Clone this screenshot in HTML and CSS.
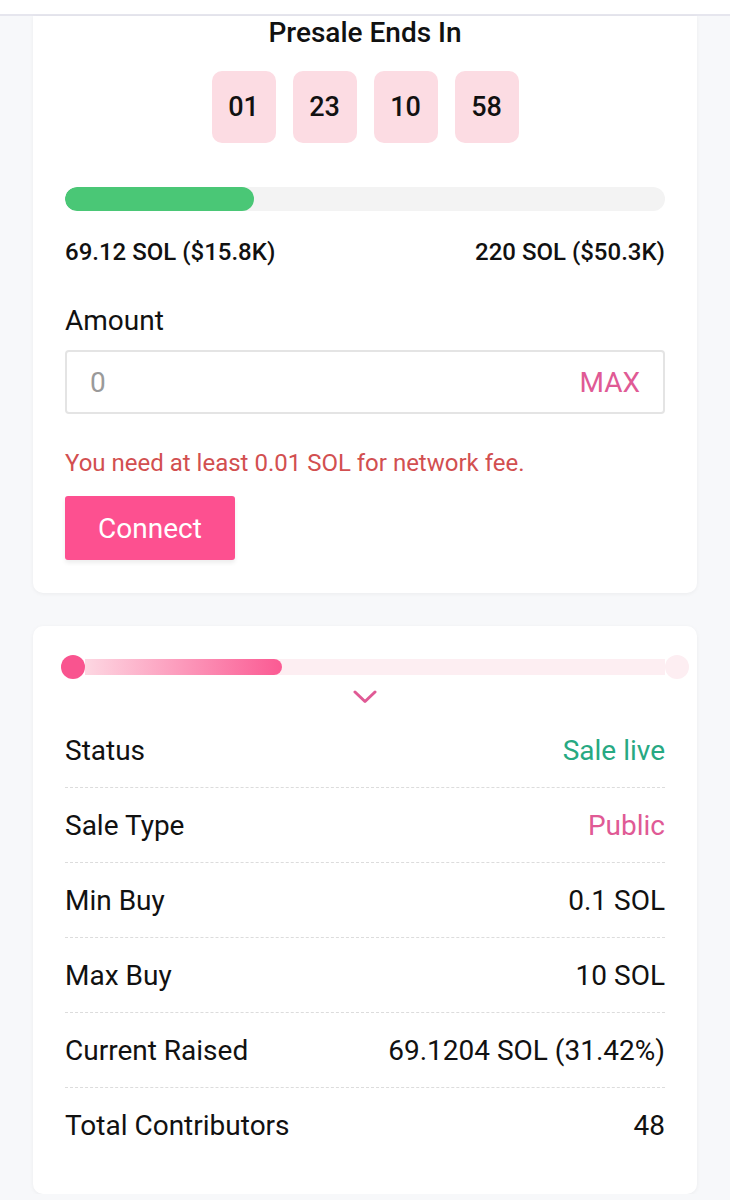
FILE: index.html
```html
<!DOCTYPE html>
<html lang="en">
<head>
<meta charset="utf-8">
<title>Presale</title>
<link rel="stylesheet" href="styles.css">
</head>
<body>
<div class="topbar"></div>
<main class="page">
  <section class="card card-top">
    <h2 class="title">Presale Ends In</h2>
    <div class="countdown">
      <div class="cd-box">01</div>
      <div class="cd-box">23</div>
      <div class="cd-box">10</div>
      <div class="cd-box">58</div>
    </div>
    <div class="progress"><div class="progress-fill" style="width:31.42%"></div></div>
    <div class="progress-labels">
      <span>69.12 SOL ($15.8K)</span>
      <span>220 SOL ($50.3K)</span>
    </div>
    <label class="amount-label">Amount</label>
    <div class="amount-input">
      <span class="placeholder">0</span>
      <span class="max">MAX</span>
    </div>
    <p class="error">You need at least 0.01 SOL for network fee.</p>
    <button class="connect">Connect</button>
  </section>

  <section class="card card-info">
    <div class="slider">
      <span class="dot dot-start"></span>
      <div class="track"><div class="track-fill" style="width:34%"></div></div>
      <span class="dot dot-end"></span>
    </div>
    <div class="chevron">
      <svg width="24" height="14" viewBox="0 0 24 14"><polyline points="2,2 12,11.5 22,2" fill="none" stroke="#e05a95" stroke-width="3" stroke-linecap="round" stroke-linejoin="round"/></svg>
    </div>
    <div class="rows">
      <div class="row"><span>Status</span><span class="green">Sale live</span></div>
      <div class="row"><span>Sale Type</span><span class="pink">Public</span></div>
      <div class="row"><span>Min Buy</span><span>0.1 SOL</span></div>
      <div class="row"><span>Max Buy</span><span>10 SOL</span></div>
      <div class="row"><span>Current Raised</span><span>69.1204 SOL (31.42%)</span></div>
      <div class="row"><span>Total Contributors</span><span>48</span></div>
    </div>
  </section>
</main>
</body>
</html>
```

FILE: styles.css
```css
* { box-sizing: border-box; }
html, body { margin: 0; padding: 0; }
body {
  background: #f7f8fa;
  font-family: Roboto, "Liberation Sans", sans-serif;
  color: #111;
}
.topbar {
  height: 16px;
  background: #fff;
  border-bottom: 2px solid #e6e6ee;
}
.page {
  padding: 0 33px;
  display: flex;
  flex-direction: column;
  gap: 33px;
}
.card {
  background: #fff;
  border-radius: 10px;
  box-shadow: 0 1px 4px rgba(0,0,0,0.05);
  padding: 0 32px;
}
.card-top {
  border-radius: 0 0 10px 10px;
  padding-bottom: 33px;
  display: flex;
  flex-direction: column;
}
.title {
  margin: 0;
  text-align: center;
  font-size: 28px;
  font-weight: 500;
  line-height: 34px;
}
.countdown {
  margin-top: 21px;
  display: flex;
  justify-content: center;
  gap: 17px;
}
.cd-box {
  width: 64px;
  height: 72px;
  border-radius: 10px;
  background: #fcdce3;
  display: flex;
  align-items: center;
  justify-content: center;
  font-size: 27px;
  font-weight: 500;
}
.progress {
  margin-top: 44px;
  height: 24px;
  border-radius: 12px;
  background: #f3f3f3;
  overflow: hidden;
}
.progress-fill {
  height: 100%;
  background: #4ac776;
  border-radius: 12px;
}
.progress-labels {
  margin-top: 27px;
  display: flex;
  justify-content: space-between;
  font-size: 24px;
  font-weight: 500;
  line-height: 28px;
}
.amount-label {
  margin-top: 38px;
  font-size: 28px;
  line-height: 34px;
}
.amount-input {
  margin-top: 12px;
  height: 64px;
  border: 2px solid #e4e4e4;
  border-radius: 4px;
  display: flex;
  align-items: center;
  justify-content: space-between;
  padding: 0 23px;
  font-size: 28px;
}
.placeholder { color: #9a9a9a; }
.max { color: #e05a95; }
.error {
  margin: 35px 0 0;
  color: #d24f50;
  font-size: 24px;
  line-height: 28px;
}
.connect {
  margin-top: 19px;
  width: 170px;
  height: 64px;
  border: none;
  border-radius: 3px;
  background: #fd5090;
  color: #fff;
  font-family: inherit;
  font-size: 28px;
  box-shadow: 0 3px 4px rgba(0,0,0,0.07);
  cursor: pointer;
}
.card-info {
  padding-top: 29px;
  padding-bottom: 32px;
}
.slider {
  margin: 0 -24px 0 -4px;
  display: flex;
  align-items: center;
  height: 24px;
}
.dot {
  width: 24px;
  height: 24px;
  border-radius: 50%;
  flex: none;
}
.dot-start { background: #f9548f; }
.dot-end { background: #fdeef2; }
.track {
  flex: 1;
  height: 16px;
  background: #fdeef2;
}
.track-fill {
  height: 100%;
  border-radius: 0 8px 8px 0;
  background: linear-gradient(90deg, #fdd7e2, #fb5a93);
}
.chevron {
  display: flex;
  justify-content: center;
  margin-top: 11px;
  margin-bottom: 9px;
  height: 14px;
}
.chevron svg { display: block; }
.row {
  height: 75px;
  display: flex;
  align-items: center;
  justify-content: space-between;
  border-bottom: 1px dashed #dcdcdc;
  font-size: 28px;
}
.row:last-child { border-bottom: none; height: 74px; }
.green { color: #27a982; }
.pink { color: #e05a95; }
```
